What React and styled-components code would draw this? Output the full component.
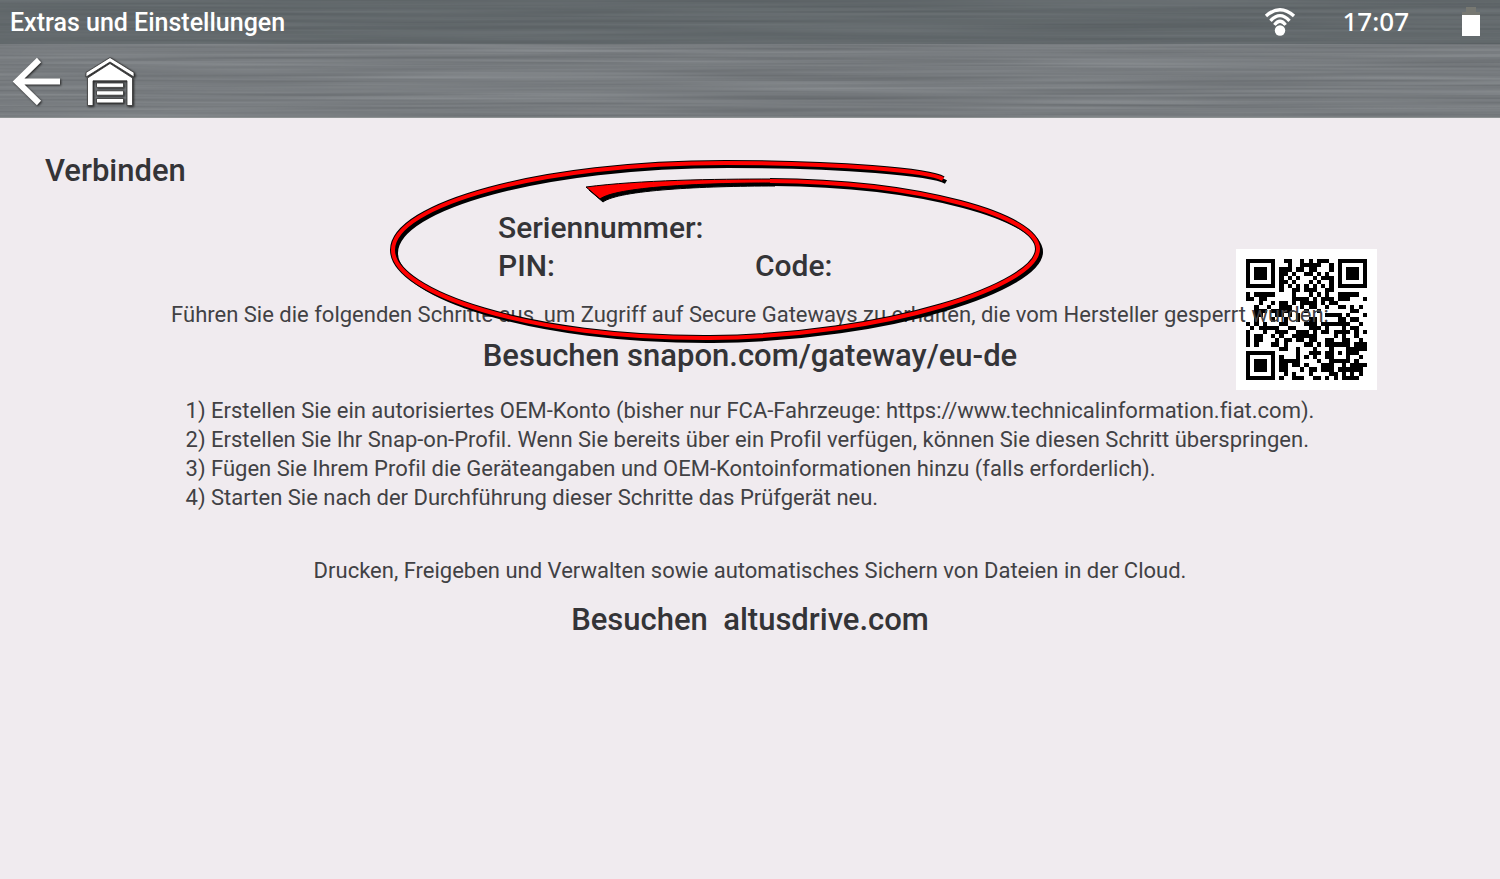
import styled, { createGlobalStyle } from 'styled-components';

const GlobalStyle = createGlobalStyle`
  * {
    box-sizing: border-box;
  }
  body {
    margin: 0;
    background: #f0ebef;
    color: #343437;
    font-family: Roboto, sans-serif;
    font-variant-ligatures: none;
  }
`;

const Header = styled.header`
  position: relative;
  color: #fff;
  background: #757b7d;
  border-bottom: 1px solid #8d9192;
`;

const Brushed = styled.svg`
  position: absolute;
  inset: 0;
  width: 100%;
  height: 100%;
`;

const StatusBar = styled.div`
  position: relative;
  display: flex;
  align-items: center;
  height: 44px;
  padding: 0 19px 0 10px;
  background: rgba(68, 78, 80, 0.42);
`;

const ScreenTitle = styled.h1`
  margin: 0 auto 0 0;
  padding-top: 2px;
  font-size: 25px;
  line-height: 42px;
  font-weight: 500;
`;

const Clock = styled.time`
  margin: 0 52px 0 46px;
  padding-bottom: 2px;
  font-family: 'Noto Sans', sans-serif;
  font-size: 26px;
  line-height: 42px;
  font-weight: 500;
`;

const Toolbar = styled.nav`
  position: relative;
  display: flex;
  align-items: center;
  gap: 24px;
  height: 73px;
  padding: 0 12px;
`;

const ToolButton = styled.button`
  width: 50px;
  height: 50px;
  padding: 0;
  border: 0;
  background: none;
  cursor: pointer;

  svg {
    display: block;
    overflow: visible;
    filter: drop-shadow(1px 1px 1px #222);
  }
`;

const Main = styled.main`
  position: relative;
  padding: 34px 45px;
`;

const SectionTitle = styled.h2`
  margin: 0;
  font-size: 31px;
  line-height: 38px;
  font-weight: 500;
`;

const Device = styled.dl`
  display: grid;
  grid-template-columns: 257px 247px;
  justify-content: center;
  margin: 19px 0 15px;
  font-size: 30px;
  line-height: 38px;
  font-weight: 500;
`;

const DeviceField = styled.dt`
  grid-column: ${({ $wide }) => ($wide ? '1 / -1' : 'auto')};
`;

const Note = styled.p`
  position: relative;
  z-index: 1;
  margin: 0;
  color: #414144;
  font-size: 22px;
  line-height: 30px;
  text-align: center;
`;

const Visit = styled.p`
  margin: ${({ $gap }) => $gap}px 0 0;
  font-size: 31px;
  line-height: 38px;
  font-weight: 500;
  text-align: center;
  white-space: pre;

  a {
    color: inherit;
    text-decoration: none;
  }
`;

const Steps = styled.ol`
  width: fit-content;
  margin: 21px auto 44px;
  padding: 0;
  list-style: none;
  color: #414144;
  font-size: 22px;
  line-height: 29px;
`;

const QrBox = styled.div`
  position: absolute;
  top: 131px;
  right: 123px;
  padding: 10px;
  background: #fff;

  svg {
    display: block;
  }
`;

const Marker = styled.svg`
  position: absolute;
  z-index: 2;
  top: 32px;
  left: calc(50% - 370px);
  pointer-events: none;
`;

// QR code, version 3, level M, mask 2
const SIZE = 29;
const DATA_WORDS = 44;
const ECC_WORDS = 26;
const FORMAT = 0x5e7c;

function gfMul(a, b) {
  let r = 0;
  for (let i = 7; i >= 0; i--) {
    r = (r << 1) ^ ((r >> 7) * 0x11d);
    r ^= ((b >> i) & 1) * a;
  }
  return r;
}

function eccFor(data) {
  const gen = new Array(ECC_WORDS).fill(0);
  gen[ECC_WORDS - 1] = 1;
  let root = 1;
  for (let i = 0; i < ECC_WORDS; i++) {
    for (let j = 0; j < ECC_WORDS; j++) {
      gen[j] = gfMul(gen[j], root);
      if (j + 1 < ECC_WORDS) gen[j] ^= gen[j + 1];
    }
    root = gfMul(root, 2);
  }
  const rest = new Array(ECC_WORDS).fill(0);
  data.forEach((word) => {
    const factor = word ^ rest.shift();
    rest.push(0);
    gen.forEach((g, i) => {
      rest[i] ^= gfMul(g, factor);
    });
  });
  return rest;
}

function makeQr(text) {
  const hex = (n) => n.toString(16).padStart(2, '0');
  const nibbles = '4' + hex(text.length) + [...text].map((c) => hex(c.charCodeAt(0))).join('') + '0';
  const data = nibbles.match(/../g).map((h) => parseInt(h, 16));
  for (let pad = 0xec; data.length < DATA_WORDS; pad ^= 0xec ^ 0x11) data.push(pad);
  const words = [...data, ...eccFor(data)];

  const grid = Array.from({ length: SIZE }, () => new Array(SIZE).fill(null));
  const set = (x, y, on) => {
    if (x >= 0 && y >= 0 && x < SIZE && y < SIZE) grid[y][x] = Boolean(on);
  };

  for (let i = 0; i < SIZE; i++) {
    set(6, i, i % 2 === 0);
    set(i, 6, i % 2 === 0);
  }
  [[3, 3], [SIZE - 4, 3], [3, SIZE - 4]].forEach(([cx, cy]) => {
    for (let dy = -4; dy <= 4; dy++) {
      for (let dx = -4; dx <= 4; dx++) {
        const d = Math.max(Math.abs(dx), Math.abs(dy));
        set(cx + dx, cy + dy, d !== 2 && d !== 4);
      }
    }
  });
  for (let dy = -2; dy <= 2; dy++) {
    for (let dx = -2; dx <= 2; dx++) {
      set(22 + dx, 22 + dy, Math.max(Math.abs(dx), Math.abs(dy)) !== 1);
    }
  }

  const bit = (i) => (FORMAT >> i) & 1;
  for (let i = 0; i < 6; i++) set(8, i, bit(i));
  set(8, 7, bit(6));
  set(8, 8, bit(7));
  set(7, 8, bit(8));
  for (let i = 9; i < 15; i++) set(14 - i, 8, bit(i));
  for (let i = 0; i < 8; i++) set(SIZE - 1 - i, 8, bit(i));
  for (let i = 8; i < 15; i++) set(8, SIZE - 15 + i, bit(i));
  set(8, SIZE - 8, 1);

  let n = 0;
  for (let right = SIZE - 1; right >= 1; right -= 2) {
    if (right === 6) right = 5;
    const upward = ((right + 1) & 2) === 0;
    for (let v = 0; v < SIZE; v++) {
      for (let j = 0; j < 2; j++) {
        const x = right - j;
        const y = upward ? SIZE - 1 - v : v;
        if (grid[y][x] === null) {
          const on = n < words.length * 8 ? (words[n >> 3] >> (7 - (n & 7))) & 1 : 0;
          grid[y][x] = Boolean(on) !== (x % 3 === 0);
          n += 1;
        }
      }
    }
  }
  return grid;
}

const QrCode = ({ value }) => {
  const path = makeQr(value)
    .flatMap((row, y) => row.map((on, x) => (on ? `M${x} ${y}h1v1h-1z` : '')))
    .join('');
  return (
    <svg width="121" height="121" viewBox="0 0 29 29" role="img" aria-label="QR-Code">
      <path d={path} shapeRendering="crispEdges" />
    </svg>
  );
};

const WifiIcon = () => (
  <svg width="32" height="30" viewBox="0 0 32 30" fill="none" stroke="#fff" strokeWidth="3.4">
    <path d="M2 9Q16 -3.500 30 9" />
    <path d="M6.500 13.800Q16 3.500 25.500 13.800" />
    <path d="M10.500 18Q16 10.500 21.500 18" />
    <circle cx="16" cy="23" r="6" fill="#666e6f" stroke="none" />
    <circle cx="16" cy="23.500" r="5.200" fill="#fff" stroke="none" />
  </svg>
);

const BatteryIcon = () => (
  <svg width="20" height="30" viewBox="0 0 20 30">
    <path d="M5 0h10v5h4v3H1V5h4z" fill="#777872" />
    <path d="M1 8h18v21H1z" fill="#fff" />
  </svg>
);

const BackIcon = () => (
  <svg width="50" height="50" viewBox="0 0 50 50" fill="none" stroke="#fff" strokeWidth="6">
    <path d="M27 4L5 25.500L27 47M5 25.500H48" />
  </svg>
);

const GarageIcon = () => (
  <svg width="50" height="50" viewBox="0 0 50 50" fill="#fff" stroke="#333" strokeWidth="0.8">
    <path d="M1.500 22L24 7.500L46.500 22V49.500H41V24.800H7V49.500H1.500z" />
    <path d="M0 21V16.500L24 1.500L48 16.500V21L24 6z" />
    <path d="M10.500 27h27v4.400h-27zM10.500 34.800h27v4.400h-27zM10.500 42.500h27v4.400h-27z" />
  </svg>
);

const LOOP =
  'M943 179C930 171 840 163 725 163C540 163 393 205 393 250C393 293 530 339 710 338C890 336 1038 285 1038 249C1038 216 920 182 770 181';
const TAIL = 'M586 187C640 180 715 179 772 179V183C700 183 616 187 600 199z';

const App = () => {
  return (
    <>
      <GlobalStyle />
      <Header>
        <Brushed aria-hidden="true">
          <filter id="brushed" x="0" y="0" width="100%" height="100%" colorInterpolationFilters="sRGB">
            <feTurbulence type="fractalNoise" baseFrequency="0.003 0.3" numOctaves="2" seed="4" />
            <feColorMatrix values="0.17 0 0 0 0.385  0.17 0 0 0 0.401  0.17 0 0 0 0.415  0 0 0 0 1" />
          </filter>
          <rect width="100%" height="100%" filter="url(#brushed)" />
        </Brushed>
        <StatusBar>
          <ScreenTitle>Extras und Einstellungen</ScreenTitle>
          <WifiIcon />
          <Clock>17:07</Clock>
          <BatteryIcon />
        </StatusBar>
        <Toolbar>
          <ToolButton aria-label="Zurück">
            <BackIcon />
          </ToolButton>
          <ToolButton aria-label="Startseite">
            <GarageIcon />
          </ToolButton>
        </Toolbar>
      </Header>
      <Main>
        <SectionTitle>Verbinden</SectionTitle>
        <Device>
          <DeviceField $wide>Seriennummer:</DeviceField>
          <DeviceField>PIN:</DeviceField>
          <DeviceField>Code:</DeviceField>
        </Device>
        <QrBox>
          <QrCode value="https://www.snapon.com/gateway/eu-de" />
        </QrBox>
        <Note>
          Führen Sie die folgenden Schritte aus, um Zugriff auf Secure Gateways zu erhalten, die vom
          Hersteller gesperrt wurden:
        </Note>
        <Visit $gap={7}>
          Besuchen <a href="https://www.snapon.com/gateway/eu-de">snapon.com/gateway/eu-de</a>
        </Visit>
        <Steps>
          <li>1) Erstellen Sie ein autorisiertes OEM-Konto (bisher nur FCA-Fahrzeuge: https://www.technicalinformation.fiat.com).</li>
          <li>2) Erstellen Sie Ihr Snap-on-Profil. Wenn Sie bereits über ein Profil verfügen, können Sie diesen Schritt überspringen.</li>
          <li>3) Fügen Sie Ihrem Profil die Geräteangaben und OEM-Kontoinformationen hinzu (falls erforderlich).</li>
          <li>4) Starten Sie nach der Durchführung dieser Schritte das Prüfgerät neu.</li>
        </Steps>
        <Note>Drucken, Freigeben und Verwalten sowie automatisches Sichern von Dateien in der Cloud.</Note>
        <Visit $gap={15}>
          {'Besuchen  '}
          <a href="https://altusdrive.com">altusdrive.com</a>
        </Visit>
        <Marker width="680" height="200" viewBox="380 150 680 200" fill="none" aria-hidden="true">
          <g transform="translate(3 3)" stroke="#000">
            <path d={LOOP} strokeWidth="4" />
            <path d={TAIL} fill="#000" />
          </g>
          <path d={LOOP} stroke="#000" strokeWidth="6" />
          <path d={TAIL} fill="#f00" stroke="#000" />
          <path d={LOOP} stroke="#f00" strokeWidth="4" />
        </Marker>
      </Main>
    </>
  );
};

export default App;
